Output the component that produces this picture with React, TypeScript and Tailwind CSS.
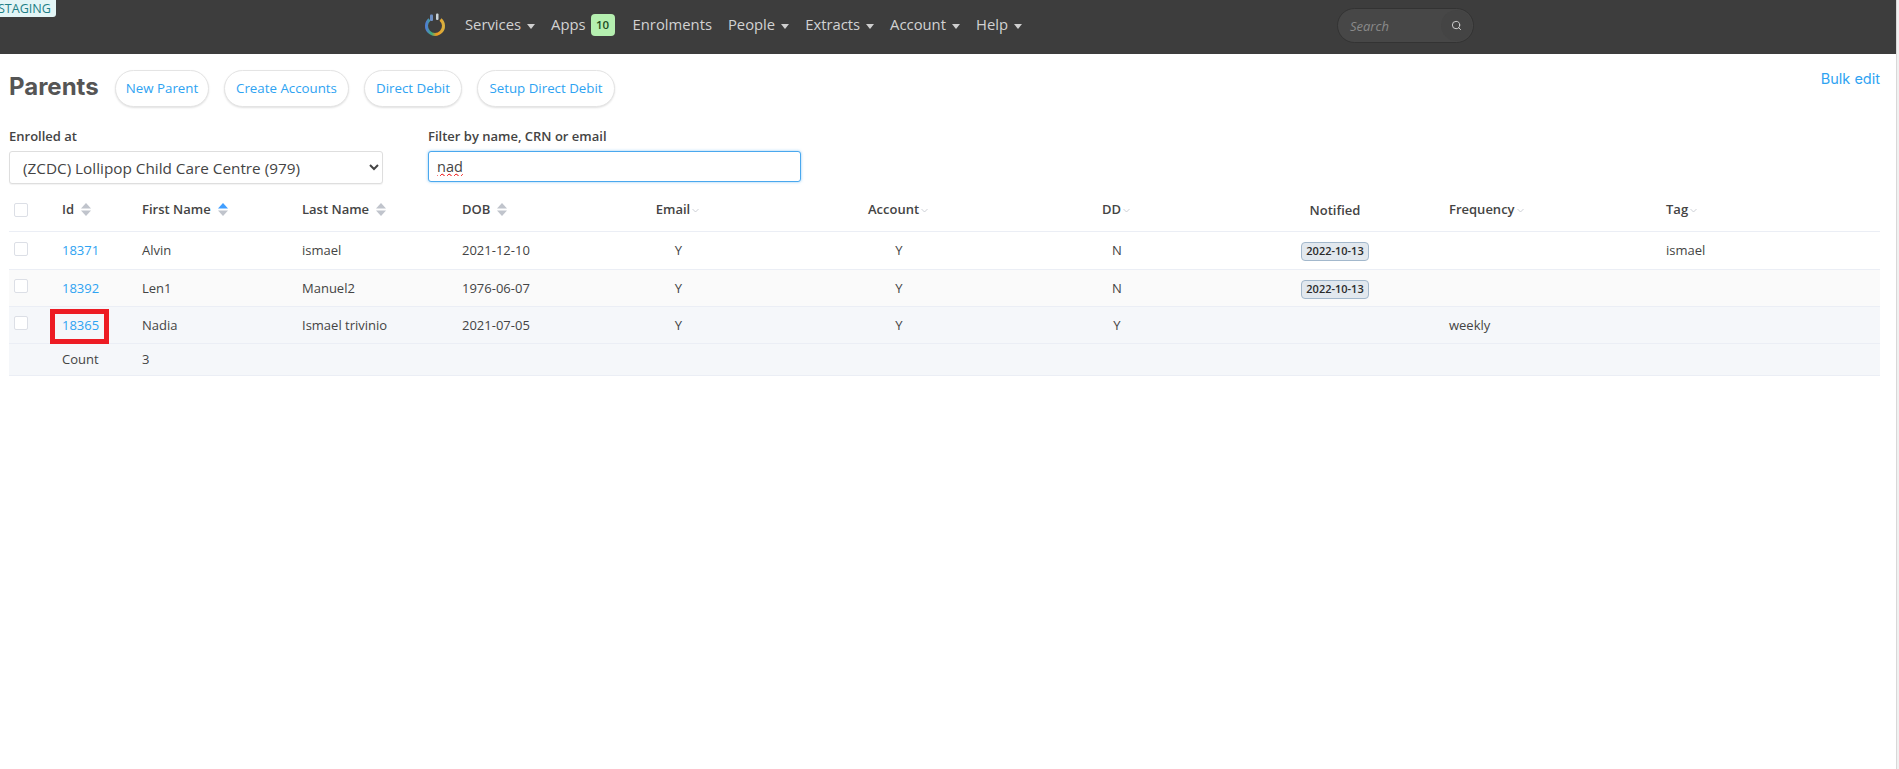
import { Search } from "lucide-react";

const navItems = [
  { label: "Services", caret: true },
  { label: "Apps", badge: "10" },
  { label: "Enrolments" },
  { label: "People", caret: true },
  { label: "Extracts", caret: true },
  { label: "Account", caret: true },
  { label: "Help", caret: true },
];

const actions = [
  { label: "New Parent", w: "w-[94px]" },
  { label: "Create Accounts", w: "w-[125px]" },
  { label: "Direct Debit", w: "w-[98px]" },
  { label: "Setup Direct Debit", w: "w-[138px]" },
];

const rows = [
  { id: "18371", first: "Alvin", last: "ismael", dob: "2021-12-10", email: "Y", account: "Y", dd: "N", notified: "2022-10-13", freq: "", tag: "ismael", bg: "bg-white", h: "h-[38px]" },
  { id: "18392", first: "Len1", last: "Manuel2", dob: "1976-06-07", email: "Y", account: "Y", dd: "N", notified: "2022-10-13", freq: "", tag: "", bg: "bg-[#fafafa]", h: "h-[37px]" },
  { id: "18365", first: "Nadia", last: "Ismael trivinio", dob: "2021-07-05", email: "Y", account: "Y", dd: "Y", notified: "", freq: "weekly", tag: "", bg: "bg-[#f5f7fa]", h: "h-[37px]", marked: true },
];

function SortCaret({ active }: { active?: boolean }) {
  return (
    <svg width="10" height="13" viewBox="0 0 10 13" className="ml-[7px] shrink-0">
      <path d="M5 0 L10 5.5 H0 Z" fill={active ? "#409eff" : "#c0c4cc"} />
      <path d="M5 13 L10 7.5 H0 Z" fill="#c0c4cc" />
    </svg>
  );
}

function FilterCaret() {
  return (
    <svg width="7" height="5" viewBox="0 0 7 5" className="ml-[2px] mt-[2px] shrink-0">
      <path d="M0.5 1 L3.5 4 L6.5 1" fill="none" stroke="#c0c4cc" strokeWidth="0.8" />
    </svg>
  );
}

function Checkbox() {
  return <span className="block h-[14px] w-[14px] rounded-[2px] border border-[#dcdfe6] bg-white" />;
}

function Logo() {
  return (
    <svg width="22" height="24" viewBox="0 0 22 24" className="shrink-0">
      <defs>
        <linearGradient id="ring" x1="0" y1="0" x2="1" y2="0">
          <stop offset="0" stopColor="#4f7fd0" />
          <stop offset="0.3" stopColor="#3fae7a" />
          <stop offset="0.6" stopColor="#f0981c" />
          <stop offset="1" stopColor="#d8b040" />
        </linearGradient>
      </defs>
      <path d="M5.5 7.5 A 8.5 8.5 0 1 0 16.5 7.5" fill="none" stroke="url(#ring)" strokeWidth="3" />
      <rect x="6" y="2.5" width="3" height="6.5" rx="1" fill="#6d8fc4" />
      <rect x="12" y="1.5" width="2.5" height="6.5" rx="1" fill="#c9d3d8" />
    </svg>
  );
}

export default function App() {
  return (
    <div className="relative flex h-screen overflow-hidden bg-white font-['Open_Sans',sans-serif] text-[13px] text-[#444]">
      <div className="relative min-w-0 flex-1">
        <span className="absolute left-0 top-0 z-10 flex h-[17px] w-[56px] items-center justify-end rounded-br-[3px] bg-[#e3f5f6] pr-[5px] text-[12.6px] leading-[17px] text-[#1d7f86]">
          STAGING
        </span>

        <nav className="flex h-[54px] items-start bg-[#3d3d3d] pl-[424px] text-[14.8px] text-[#d2d2d2]">
          <div className="mt-[12px] mr-[19px]">
            <Logo />
          </div>
          <ul className="mt-[14px] flex items-center">
            {navItems.map((item) => (
              <li key={item.label} className="mr-[16px] flex h-[22px] items-center last:mr-0">
                <span className="mb-[2px]">{item.label}</span>
                {item.caret && <span className="ml-[6px] mt-[2px] h-0 w-0 border-x-[4px] border-t-[5px] border-x-transparent border-t-[#cfcfcf]" />}
                {item.badge && (
                  <span className="ml-[5px] mr-[2px] flex h-[22px] w-[24px] items-center justify-center rounded-[4px] bg-[#b5efb0] text-[11.5px] font-semibold text-[#1d4d22]">
                    {item.badge}
                  </span>
                )}
              </li>
            ))}
          </ul>
          <div className="ml-[315px] mt-[8px] flex h-[35px] w-[137px] items-center justify-between rounded-full border border-[#333] bg-[#474747] pl-[12px] pr-[1px]">
            <span className="mt-[2px] text-[13px] italic text-[#8a8a8a]">Search</span>
            <span className="flex h-[31px] w-[31px] items-center justify-center rounded-full bg-[#444]">
              <Search size={11} strokeWidth={2} className="text-[#d8d8d8]" />
            </span>
          </div>
        </nav>

        <main className="pl-[9px] pr-[16px]">
          <div className="flex h-[53px] items-start pt-[16px]">
            <h1 className="mr-[15px] w-[91px] font-['Inter',sans-serif] text-[24px] font-bold leading-[34px] text-[#555]">
              Parents
            </h1>
            <div className="flex gap-[15px]">
              {actions.map((a) => (
                <button
                  key={a.label}
                  className={`h-[37px] ${a.w} rounded-full border border-[#e4e4e4] bg-white text-[13.3px] text-[#2ea3f2] shadow-[0_1px_2px_rgba(0,0,0,0.12)]`}
                >
                  {a.label}
                </button>
              ))}
            </div>
            <a className="ml-auto mt-[-1px] font-['Inter',sans-serif] text-[14.5px] leading-[20px] text-[#2ea3f2]">Bulk edit</a>
          </div>

          <div className="mt-[19px] flex items-start">
            <label className="block w-[419px] text-[13px] font-semibold leading-[20px] text-[#444]">
              Enrolled at
              <select className="mt-[5px] block h-[33px] w-[374px] rounded-[3px] border border-[#dedede] bg-white pl-[9px] text-[15.3px] font-normal text-[#444] shadow-[0_1px_1px_rgba(0,0,0,0.05)]">
                <option>(ZCDC) Lollipop Child Care Centre (979)</option>
              </select>
            </label>
            <label className="block text-[13px] font-semibold leading-[20px] text-[#444]">
              Filter by name, CRN or email
              <input
                readOnly
                value="nad"
                className="mt-[5px] block h-[31px] w-[373px] rounded-[3px] border border-[#4aa8ee] bg-white pl-[8px] text-[14.5px] font-normal text-[#444] underline decoration-[#e00] decoration-wavy decoration-1 shadow-[0_0_3px_rgba(74,168,238,0.6)] outline-none"
              />
            </label>
          </div>

          <table className="mt-[6px] w-[1871px] table-fixed border-collapse text-[13px]">
            <colgroup>
              <col className="w-[43px]" />
              <col className="w-[80px]" />
              <col className="w-[160px]" />
              <col className="w-[160px]" />
              <col className="w-[111px]" />
              <col className="w-[231px]" />
              <col className="w-[210px]" />
              <col className="w-[226px]" />
              <col className="w-[210px]" />
              <col className="w-[217px]" />
              <col className="w-[223px]" />
            </colgroup>
            <thead>
              <tr className="h-[41px] border-b border-[#ebeef5] text-left font-semibold text-[#444]">
                <th className="pb-[1px] pl-[5px] font-semibold"><Checkbox /></th>
                {["Id", "First Name", "Last Name", "DOB"].map((h) => (
                  <th key={h} className="pb-[1px] pl-[10px] font-semibold">
                    <span className="flex items-center">
                      {h}
                      <SortCaret active={h === "First Name"} />
                    </span>
                  </th>
                ))}
                {["Email", "Account", "DD"].map((h) => (
                  <th key={h} className="pb-[1px] font-semibold">
                    <span className="flex items-center justify-center pr-[2px]">
                      {h}
                      <FilterCaret />
                    </span>
                  </th>
                ))}
                <th className="text-center font-semibold">Notified</th>
                {["Frequency", "Tag"].map((h) => (
                  <th key={h} className="pb-[1px] pl-[9px] font-semibold">
                    <span className="flex items-center">
                      {h}
                      <FilterCaret />
                    </span>
                  </th>
                ))}
              </tr>
            </thead>
            <tbody>
              {rows.map((r) => (
                <tr key={r.id} className={`${r.h} border-b border-[#ebeef5] ${r.bg}`}>
                  <td className="pl-[5px] pb-[3px]"><Checkbox /></td>
                  <td className="relative pl-[10px] pt-[2px]">
                    <a className="text-[#2ea3f2]">{r.id}</a>
                    {r.marked && <span className="absolute left-[-2px] top-[2px] h-[35px] w-[59px] border-[5px] border-[#ed1c24]" />}
                  </td>
                  <td className="pl-[10px] pt-[2px]">{r.first}</td>
                  <td className="pl-[10px] pt-[2px]">{r.last}</td>
                  <td className="pl-[10px] pt-[2px]">{r.dob}</td>
                  <td className="pt-[2px] text-center">{r.email}</td>
                  <td className="pt-[2px] text-center">{r.account}</td>
                  <td className="pt-[2px] text-center">{r.dd}</td>
                  <td className="text-center">
                    {r.notified && (
                      <span className="mt-[3px] inline-flex h-[19px] w-[68px] items-center justify-center rounded-[4px] border border-[#a3b8cc] bg-[#e2e8ee] text-[11px] font-semibold text-[#2b2b2b]">
                        {r.notified}
                      </span>
                    )}
                  </td>
                  <td className="pl-[9px] pt-[2px]">{r.freq}</td>
                  <td className="pl-[9px] pt-[2px]">{r.tag}</td>
                </tr>
              ))}
              <tr className="h-[32px] border-b border-[#ebeef5] bg-[#f5f7fa]">
                <td />
                <td className="pl-[10px] pt-[1px]">Count</td>
                <td className="pl-[10px] pt-[1px]">3</td>
                <td colSpan={8} />
              </tr>
            </tbody>
          </table>
        </main>
      </div>
      <div className="w-[3px] shrink-0 border-l border-[#d8d8d8] bg-[#f1f1f1]" />
    </div>
  );
}
